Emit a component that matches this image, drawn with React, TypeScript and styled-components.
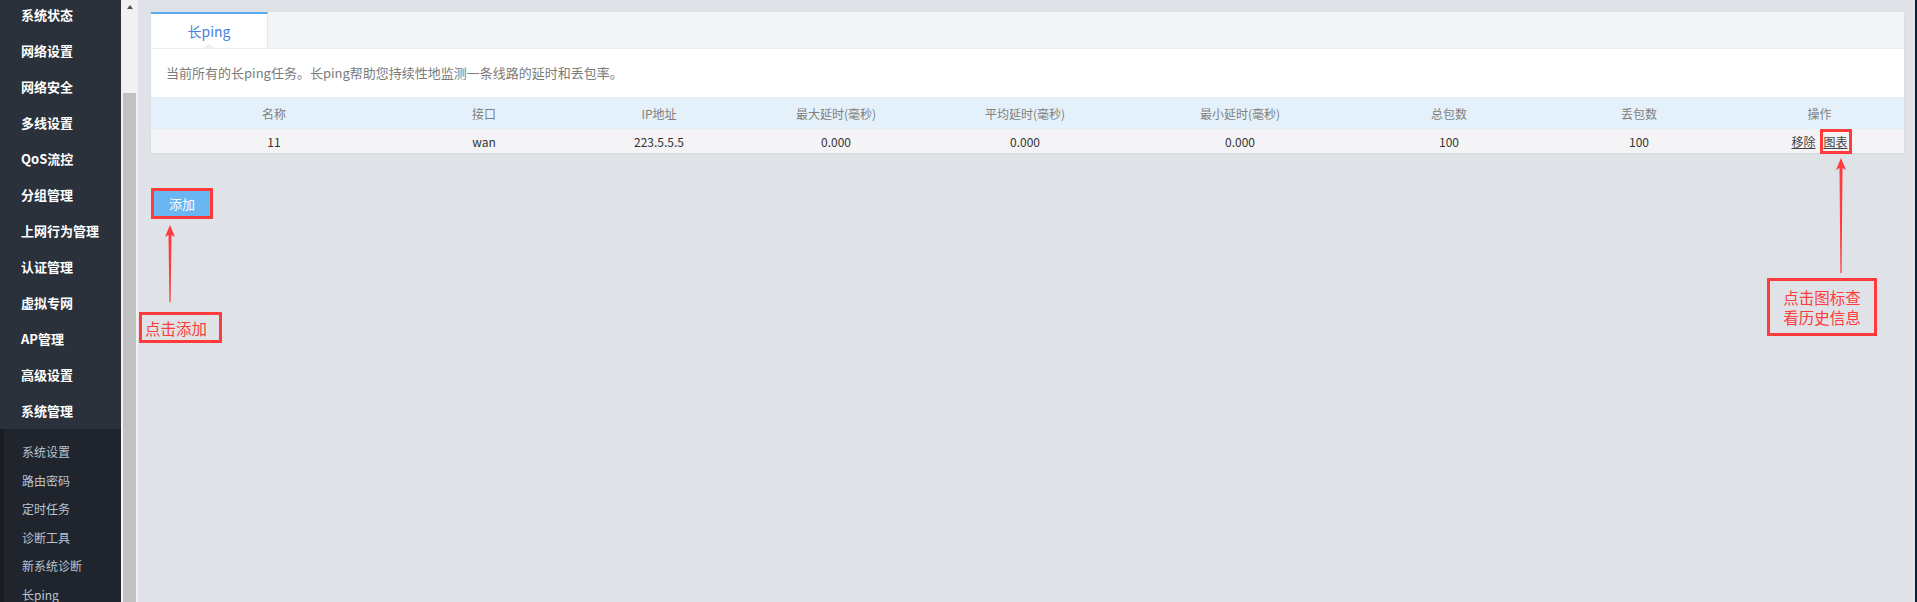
import React from 'react';
import styled, { createGlobalStyle } from 'styled-components';

const GlobalStyle = createGlobalStyle`
  html, body {
    margin: 0;
    padding: 0;
  }
  body {
    font-family: "Noto Sans CJK SC", "Noto Sans", sans-serif;
    background: #dfe2e7;
    overflow: hidden;
  }
`;

const Page = styled.div`
  position: relative;
  display: flex;
  width: 1917px;
  height: 602px;
  overflow: hidden;
`;

const Sidebar = styled.nav`
  width: 121px;
  flex-shrink: 0;
  background: #2b313b;
  display: flex;
  flex-direction: column;
`;

const MainMenu = styled.ul`
  list-style: none;
  margin: -3px 0 0;
  padding: 0;
`;

const MenuItem = styled.li`
  height: 36px;
  line-height: 36px;
  padding-left: 21px;
  color: #ffffff;
  font-size: 13px;
  font-weight: 700;
  white-space: nowrap;
`;

const SubMenu = styled.ul`
  flex: 1;
  list-style: none;
  margin: 0;
  padding: 9px 0 0;
  background: #20252d;
  border-left: 4px solid #181c21;
`;

const SubItem = styled.li`
  height: 28.5px;
  line-height: 28.5px;
  padding-left: 18px;
  color: #b9c3d4;
  font-size: 12px;
  white-space: nowrap;
`;

const Scrollbar = styled.div`
  width: 17px;
  flex-shrink: 0;
  background: #f1f1f1;
  display: flex;
  flex-direction: column;
  align-items: center;
`;

const ScrollArrow = styled.div`
  margin-top: 5px;
  width: 0;
  height: 0;
  border-left: 3.5px solid transparent;
  border-right: 3.5px solid transparent;
  border-bottom: 4px solid #505050;
`;

const Thumb = styled.div`
  margin-top: 84px;
  width: 13px;
  flex: 1;
  background: #c1c1c1;
`;

const Main = styled.main`
  flex: 1;
  min-width: 0;
  padding: 12px 11px 0 13px;
  background: #dfe2e7;
`;

const Edge = styled.div`
  width: 2px;
  flex-shrink: 0;
  background: #0c1f3d;
`;

const Panel = styled.section`
  background: #ffffff;
  box-shadow: 0 1px 2px rgba(0, 0, 0, 0.06);
`;

const TabBar = styled.div`
  display: flex;
  height: 36px;
  background: #f3f4f6;
  border-bottom: 1px solid #eceef1;
`;

const Tab = styled.div`
  position: relative;
  box-sizing: border-box;
  width: 117px;
  height: 36px;
  display: flex;
  align-items: center;
  justify-content: center;
  background: #ffffff;
  border-top: 2px solid #5aaaf0;
  border-right: 1px solid #e3e6ea;
  color: #4a80df;
  font-size: 14px;

  &::after {
    content: '';
    position: absolute;
    left: 50%;
    bottom: -1px;
    transform: translateX(-50%);
    border-left: 7px solid transparent;
    border-right: 7px solid transparent;
    border-bottom: 5px solid #eceef1;
  }
`;

const Desc = styled.p`
  margin: 0;
  height: 48px;
  line-height: 48px;
  padding-left: 15px;
  color: #7b7b7b;
  font-size: 13px;
`;

const Table = styled.table`
  width: 100%;
  border-collapse: collapse;
  table-layout: fixed;
`;

const Col = styled.col<{ $w: number }>`
  width: ${p => p.$w}px;
`;

const HeadRow = styled.tr`
  background: #e4f1fa;
`;

const HeadCell = styled.th`
  height: 32px;
  padding: 0;
  font-size: 12px;
  font-weight: 400;
  color: #808080;
  text-align: center;
`;

const DataRow = styled.tr`
  background: #f4f4f6;
`;

const Cell = styled.td`
  height: 24px;
  padding: 0;
  font-size: 12px;
  color: #333333;
  text-align: center;
`;

const ActionLink = styled.a<{ $marked?: boolean }>`
  display: inline-block;
  line-height: 17px;
  padding: 1px;
  margin-left: ${p => (p.$marked ? '6px' : '0')};
  color: #444444;
  font-size: 12px;
  font-weight: 400;
  text-decoration: underline;
  outline: ${p => (p.$marked ? '3px solid #ff3b3b' : 'none')};
  cursor: pointer;
`;

const AddButton = styled.button`
  display: block;
  margin-top: 35px;
  width: 62px;
  height: 31px;
  border: none;
  padding: 0;
  background: #6ab6f2;
  color: #ffffff;
  font-family: inherit;
  font-size: 13px;
  box-shadow: inset 0 0 0 3px #ff3b3b;
`;

const Note = styled.div<{ $x: number; $y: number; $w: number; $h: number; $left?: boolean }>`
  position: absolute;
  left: ${p => p.$x}px;
  top: ${p => p.$y}px;
  width: ${p => p.$w}px;
  height: ${p => p.$h}px;
  box-sizing: border-box;
  border: 3px solid #ff3b3b;
  padding-left: ${p => (p.$left ? '3px' : '0')};
  display: flex;
  flex-direction: column;
  justify-content: center;
  align-items: ${p => (p.$left ? 'flex-start' : 'center')};
  color: #ff3b3b;
  font-size: 15.5px;
  line-height: 20px;
`;

const ArrowSvg = styled.svg<{ $x: number; $y: number }>`
  position: absolute;
  left: ${p => p.$x}px;
  top: ${p => p.$y}px;
  overflow: visible;
`;

function Arrow({ x, tip, tail }: { x: number; tip: number; tail: number }) {
  const h = tail - tip;
  return (
    <ArrowSvg $x={x - 6} $y={tip} width={12} height={h} viewBox={`0 0 12 ${h}`}>
      <polygon
        points={`6,0 11,12 7.5,10 6.6,${h} 5.4,${h} 4.5,10 1,12`}
        fill="#ff3b3b"
      />
    </ArrowSvg>
  );
}

const menu = ['系统状态', '网络设置', '网络安全', '多线设置', 'QoS流控', '分组管理', '上网行为管理', '认证管理', '虚拟专网', 'AP管理', '高级设置', '系统管理'];
const subMenu = ['系统设置', '路由密码', '定时任务', '诊断工具', '新系统诊断', '长ping'];

const columns = [
  { title: '名称', w: 246 },
  { title: '接口', w: 174 },
  { title: 'IP地址', w: 176 },
  { title: '最大延时(毫秒)', w: 178 },
  { title: '平均延时(毫秒)', w: 200 },
  { title: '最小延时(毫秒)', w: 230 },
  { title: '总包数', w: 188 },
  { title: '丢包数', w: 192 },
  { title: '操作', w: 169 },
];

const rows = [
  { name: '11', iface: 'wan', ip: '223.5.5.5', max: '0.000', avg: '0.000', min: '0.000', total: '100', lost: '100' },
];

export default function App() {
  return (
    <Page>
      <GlobalStyle />
      <Sidebar>
        <MainMenu>
          {menu.map(m => <MenuItem key={m}>{m}</MenuItem>)}
        </MainMenu>
        <SubMenu>
          {subMenu.map(s => <SubItem key={s}>{s}</SubItem>)}
        </SubMenu>
      </Sidebar>
      <Scrollbar>
        <ScrollArrow />
        <Thumb />
      </Scrollbar>
      <Main>
        <Panel>
          <TabBar>
            <Tab>长ping</Tab>
          </TabBar>
          <Desc>当前所有的长ping任务。长ping帮助您持续性地监测一条线路的延时和丢包率。</Desc>
          <Table>
            <colgroup>
              {columns.map(c => <Col key={c.title} $w={c.w} />)}
            </colgroup>
            <thead>
              <HeadRow>
                {columns.map(c => <HeadCell key={c.title}>{c.title}</HeadCell>)}
              </HeadRow>
            </thead>
            <tbody>
              {rows.map(r => (
                <DataRow key={r.name}>
                  <Cell>{r.name}</Cell>
                  <Cell>{r.iface}</Cell>
                  <Cell>{r.ip}</Cell>
                  <Cell>{r.max}</Cell>
                  <Cell>{r.avg}</Cell>
                  <Cell>{r.min}</Cell>
                  <Cell>{r.total}</Cell>
                  <Cell>{r.lost}</Cell>
                  <Cell>
                    <ActionLink>移除</ActionLink>
                    <ActionLink $marked>图表</ActionLink>
                  </Cell>
                </DataRow>
              ))}
            </tbody>
          </Table>
        </Panel>
        <AddButton>添加</AddButton>
      </Main>
      <Edge />

      <Arrow x={170} tip={225} tail={302} />
      <Note $x={139} $y={312} $w={83} $h={31} $left>点击添加</Note>

      <Arrow x={1841} tip={158} tail={273} />
      <Note $x={1767} $y={278} $w={110} $h={58}>
        <span>点击图标查</span>
        <span>看历史信息</span>
      </Note>
    </Page>
  );
}
